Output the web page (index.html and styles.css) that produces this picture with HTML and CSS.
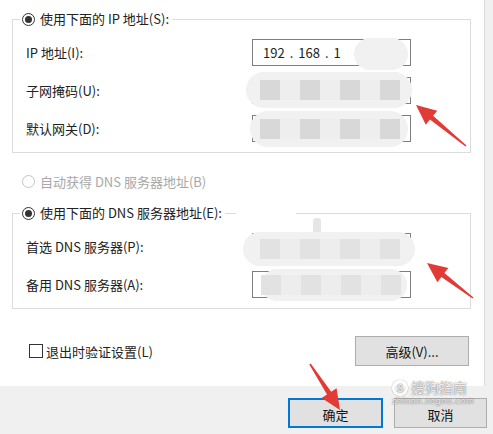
FILE: index.html
```html
<!DOCTYPE html>
<html lang="zh-CN">
<head>
    <meta charset="UTF-8">
    <title>Internet 协议版本 4 (TCP/IPv4) 属性</title>
    <link rel="stylesheet" href="styles.css">
</head>
<body>
    <div class="panel">
        <fieldset class="grupo">
            <legend><span class="radio checked"></span>使用下面的 IP 地址(S):</legend>
            <div class="fila">
                <label>IP 地址(I):</label>
                <div class="campo"><span>192</span><span>.</span><span>168</span><span>.</span><span>1</span></div>
            </div>
            <div class="fila">
                <label>子网掩码(U):</label>
                <div class="campo"></div>
            </div>
            <div class="fila">
                <label>默认网关(D):</label>
                <div class="campo"></div>
            </div>
        </fieldset>

        <div class="opcion disabled"><span class="radio"></span>自动获得 DNS 服务器地址(B)</div>

        <fieldset class="grupo dns">
            <legend><span class="radio checked"></span>使用下面的 DNS 服务器地址(E):</legend>
            <div class="fila">
                <label>首选 DNS 服务器(P):</label>
                <div class="campo"></div>
            </div>
            <div class="fila">
                <label>备用 DNS 服务器(A):</label>
                <div class="campo"></div>
            </div>
        </fieldset>

        <div class="acciones">
            <label class="check"><span class="caja"></span>退出时验证设置(L)</label>
            <button class="btn avanzado">高级(V)...</button>
        </div>
    </div>

    <div class="pie">
        <button class="btn ok">确定</button>
        <button class="btn">取消</button>
    </div>

    <!-- mosaico que tapa las direcciones -->
    <div class="mancha m1"></div>
    <div class="mancha m2"><i></i><i></i><i></i><i></i><i></i><i></i><i></i></div>
    <div class="mancha m3"><i></i><i></i><i></i><i></i><i></i><i></i><i></i></div>
    <div class="tapa"></div>
    <div class="marca"></div>
    <div class="mancha m4 suave"><i></i><i></i><i></i><i></i><i></i><i></i><i></i></div>
    <div class="mancha m5 suave"><i></i><i></i><i></i><i></i><i></i><i></i><i></i></div>

    <div class="sello">
        <div class="sello-top"><span class="logo">S</span>搜狗指南</div>
        <div class="sello-url">zhinan.sogou.com</div>
    </div>

    <svg class="flechas" width="493" height="434" viewBox="0 0 493 434">
        <polygon points="466.5,145.4 433.1,115.8 437.2,110.7 416,105 425.8,124.7 429.9,119.6 465.5,146.6"/>
        <polygon points="473.5,297.4 444.4,273.1 448.4,267.9 427,263 437.4,282.3 441.4,277.1 472.5,298.6"/>
        <polygon points="310.7,363.6 331.2,391.8 336.6,388.3 340,410 321.6,398.1 327,394.6 309.3,364.4"/>
    </svg>
</body>
</html>
```

FILE: styles.css
```css
body {
    margin: 0;
    width: 493px;
    height: 434px;
    position: relative;
    overflow: hidden;
    background-color: #f0f0f0;
    font-family: "Noto Sans CJK SC", "Liberation Sans", sans-serif;
    font-size: 13px;
    color: #222;
}

.panel {
    box-sizing: border-box;
    width: 485px;
    height: 386px;
    padding-top: 10px;
    background: white;
    border-right: 1px solid #dadada;
}

.grupo {
    box-sizing: border-box;
    width: 459px;
    margin: 0 0 0 12px;
    padding: 11px 0 10px 13px;
    border: 1px solid #dcdcdc;
    display: flex;
    flex-direction: column;
    gap: 11px;
}

.grupo legend {
    display: flex;
    align-items: center;
    height: 18px;
    line-height: 18px;
    padding: 0 3px 0 2px;
    margin-left: -6px;
}

.radio {
    box-sizing: border-box;
    width: 13px;
    height: 13px;
    margin-right: 5px;
    border: 1px solid #333;
    border-radius: 50%;
    display: inline-flex;
    align-items: center;
    justify-content: center;
}

.radio.checked::after {
    content: "";
    width: 7px;
    height: 7px;
    border-radius: 50%;
    background: #333;
}

.fila {
    display: grid;
    grid-template-columns: 226px 159px;
    align-items: center;
    height: 27px;
}

.campo {
    box-sizing: border-box;
    height: 27px;
    border: 1px solid #7f7f7f;
    background: white;
    display: flex;
    align-items: center;
    gap: 5px;
    padding-left: 10px;
    color: #222;
}

.opcion {
    display: flex;
    align-items: center;
    height: 18px;
    margin: 19px 0 14px 22px;
}

.disabled {
    color: #a8a8a8;
}

.disabled .radio {
    border-color: #c4c4c4;
}

.acciones {
    display: flex;
    justify-content: space-between;
    align-items: center;
    width: 440px;
    margin: 27px 0 0 29px;
}

.check {
    display: flex;
    align-items: center;
    gap: 3px;
}

.caja {
    box-sizing: border-box;
    width: 14px;
    height: 14px;
    border: 1px solid #333;
    background: white;
}

.btn {
    box-sizing: border-box;
    height: 30px;
    border: 1px solid #adadad;
    background-color: #e1e1e1;
    font-family: inherit;
    font-size: 13px;
    color: #111;
    padding: 0;
}

.avanzado {
    width: 114px;
}

.pie {
    display: flex;
    justify-content: flex-end;
    gap: 11px;
    height: 48px;
    box-sizing: border-box;
    padding: 12px 6px 0 0;
}

.pie .btn {
    width: 93px;
    padding-top: 2px;
}

.pie .ok {
    width: 95px;
    border: 2px solid #0078d7;
}

.mancha {
    position: absolute;
    background: #f1f1f1;
    border-radius: 18px;
    display: flex;
    align-items: center;
    padding-left: 14px;
    box-sizing: border-box;
}

.mancha i {
    width: 20px;
    height: 20px;
    background: #d8d8d8;
}

.mancha i:nth-child(even) {
    background: #eeeeee;
}

.mancha.suave i {
    background: #e2e2e2;
}

.mancha.suave i:nth-child(even) {
    background: #ededed;
}

.m1 { left: 354px; top: 38px; width: 54px; height: 32px; border-radius: 16px; }
.m2 { left: 246px; top: 72px; width: 166px; height: 36px; }
.m3 { left: 250px; top: 111px; width: 158px; height: 36px; padding-left: 10px; }
.m4 { left: 243px; top: 232px; width: 172px; height: 34px; padding-left: 17px; }
.m5 { left: 261px; top: 269px; width: 146px; height: 32px; padding-left: 0; border-radius: 16px; }

.tapa {
    position: absolute;
    left: 236px;
    top: 211px;
    width: 60px;
    height: 5px;
    background: white;
}

.marca {
    position: absolute;
    left: 313px;
    top: 218px;
    width: 8px;
    height: 16px;
    border-radius: 3px;
    background: #e6e6e6;
    border-bottom: 2px solid #cfcfcf;
}

.sello {
    position: absolute;
    left: 392px;
    top: 379px;
    color: rgba(255, 255, 255, 0.9);
    text-shadow: 0 0 1px rgba(0, 0, 0, 0.6), 0 0 2px rgba(0, 0, 0, 0.25);
}

.sello-top {
    display: flex;
    align-items: center;
    gap: 3px;
    font-size: 14px;
    line-height: 17px;
}

.logo {
    box-sizing: border-box;
    width: 16px;
    height: 16px;
    border: 2px solid rgba(255, 255, 255, 0.9);
    border-radius: 50%;
    font-size: 10px;
    font-weight: bold;
    line-height: 12px;
    text-align: center;
    box-shadow: 0 0 1px rgba(0, 0, 0, 0.6);
}

.sello-url {
    font-family: "DejaVu Sans", sans-serif;
    font-size: 8px;
    letter-spacing: 0.6px;
    line-height: 8px;
    margin-top: 2px;
}

.flechas {
    position: absolute;
    left: 0;
    top: 0;
    pointer-events: none;
    fill: #e23b36;
}
```
